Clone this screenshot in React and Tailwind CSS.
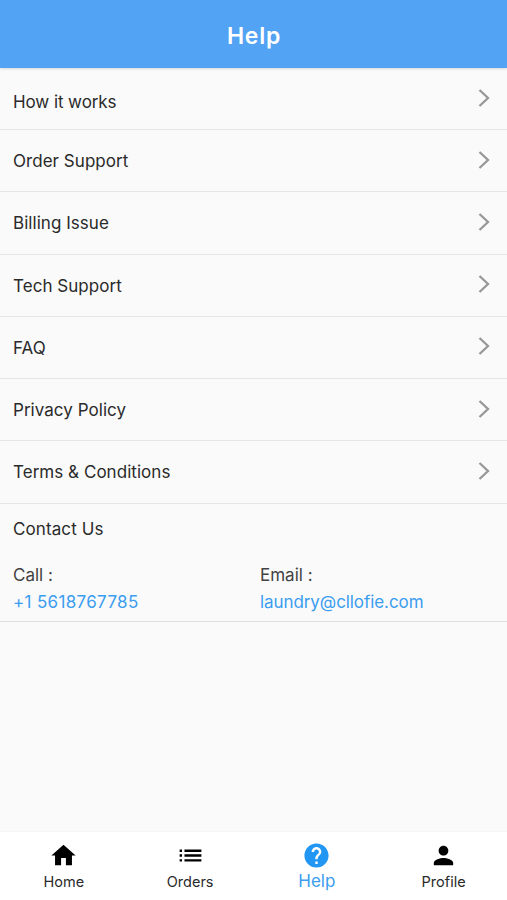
import React from 'react';
import { MdHome, MdList, MdHelp, MdPerson } from 'react-icons/md';

const topics = ['How it works', 'Order Support', 'Billing Issue', 'Tech Support', 'FAQ', 'Privacy Policy', 'Terms & Conditions'];

const tabs = [
  { label: 'Home', Icon: MdHome },
  { label: 'Orders', Icon: MdList },
  { label: 'Help', Icon: MdHelp, active: true },
  { label: 'Profile', Icon: MdPerson },
];

const Chevron = () => (
  <svg viewBox="0 0 12 20" className="w-3 h-5 mr-[17px] mb-0.5" fill="none" stroke="#979797" strokeWidth="2.3">
    <path d="M1.5 2l8.5 8-8.5 8" />
  </svg>
);

const HelpPage = () => (
  <div className="h-[900px] w-full flex flex-col bg-[#fafafa] text-[#2a2a2a] font-['Inter',sans-serif]">
    <header className="h-[68px] shrink-0 flex items-center justify-center bg-[#52a3f3] pt-1 pl-px shadow-sm">
      <h1 className="text-[23px] leading-none font-semibold tracking-[0.75px] text-white">Help</h1>
    </header>

    <main className="flex-1">
      <ul>
        {topics.map((topic) => (
          <li key={topic} className="group h-[62.25px] first:h-[62px] flex items-center justify-between border-b border-[#e6e6e6] pl-[13px]">
            <span className="text-[17px] tracking-[0.04px] pt-[2.5px] group-first:pt-[8px] group-first:tracking-[-0.08px]">{topic}</span>
            <Chevron />
          </li>
        ))}
      </ul>
      <section className="h-[118px] border-b border-[#e0e0e0] px-[13px] pt-3">
        <h2 className="text-[17px] leading-[26px] tracking-[0.1px]">Contact Us</h2>
        <div className="mt-[20px] flex text-[17px] leading-[27px] text-[#424242]">
          <div className="w-[247px]">
            <p>Call :</p>
            <p className="text-[#3b9df0] tracking-[0.33px]">+1 5618767785</p>
          </div>
          <div>
            <p>Email :</p>
            <p className="text-[#3b9df0] tracking-[-0.08px]">laundry@cllofie.com</p>
          </div>
        </div>
      </section>
    </main>

    <nav className="h-[69px] shrink-0 grid grid-cols-4 border-t border-[#f6f6f6] bg-white">
      {tabs.map(({ label, Icon, active }) => (
        <div key={label} className={`flex flex-col items-center pt-[9px] first:pl-px ${active ? 'text-[#2196f3]' : 'text-black'}`}>
          <Icon className="size-[29px]" />
          <span className={active ? 'text-[17px] leading-[22px] text-[#3b9df0]' : 'text-[14.5px] leading-6 text-[#2a2a2a]'}>{label}</span>
        </div>
      ))}
    </nav>
  </div>
);

export default HelpPage;
